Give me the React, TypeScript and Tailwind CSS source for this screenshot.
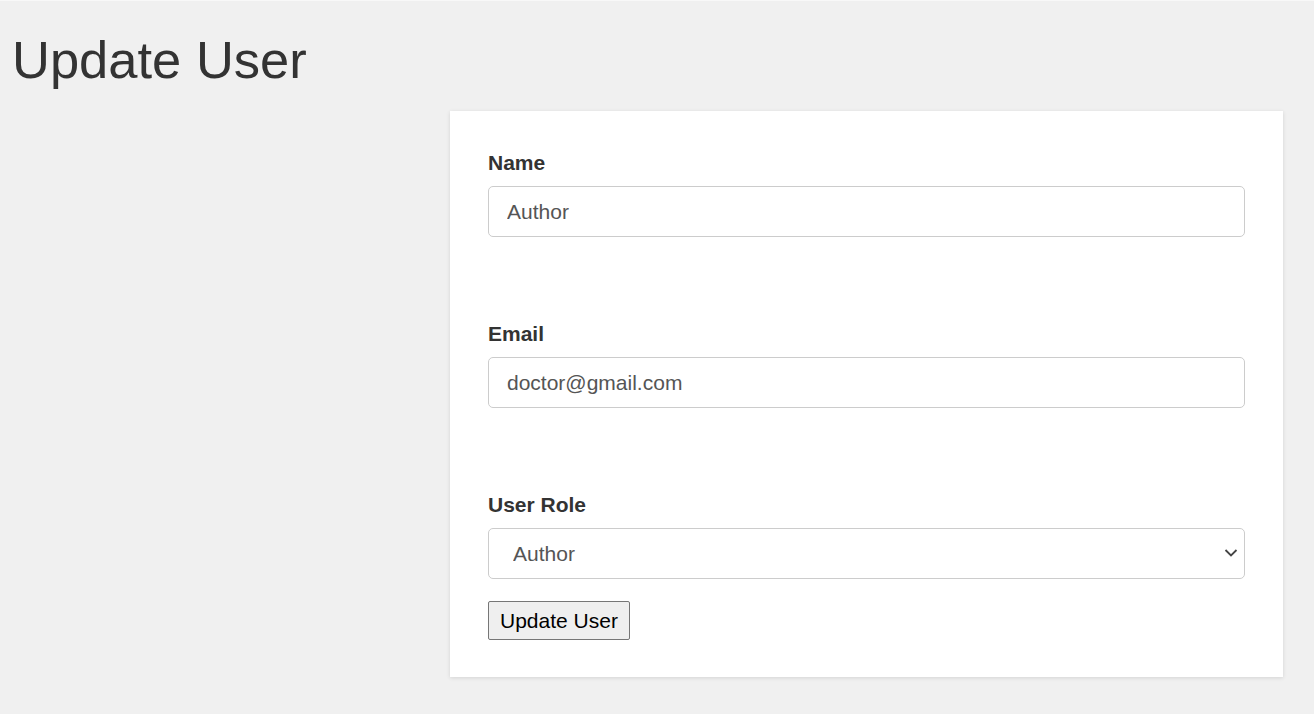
export default function App() {
  return (
    <div
      className="min-h-[714px] bg-[#f0f0f0] border-t border-[#f8f8f8]"
      style={{ fontFamily: '"Liberation Sans", Arial, sans-serif' }}
    >
      <h1 className="pl-3 pt-[29px] text-[52.5px] leading-[60px] text-[#333]">Update User</h1>

      <div className="flex justify-end pr-[31px] mt-[21px]">
        <form className="w-[833px] bg-white px-[38px] pt-[40px] pb-[37px] shadow-[0_1px_4px_rgba(0,0,0,0.12)]">
          <label className="block text-[21px] leading-[24px] font-bold text-[#333]">Name</label>
          <input
            defaultValue="Author"
            className="mt-[11px] block w-full h-[51px] px-[18px] text-[21px] text-[#555] border border-[#ccc] rounded-[5px] outline-none"
          />

          <label className="mt-[85px] block text-[21px] leading-[24px] font-bold text-[#333]">Email</label>
          <input
            defaultValue="doctor@gmail.com"
            className="mt-[11px] block w-full h-[51px] px-[18px] text-[21px] text-[#555] border border-[#ccc] rounded-[5px] outline-none"
          />

          <label className="mt-[85px] block text-[21px] leading-[24px] font-bold text-[#333]">User Role</label>
          <div className="relative mt-[11px]">
            <select
              defaultValue="Author"
              className="block w-full h-[51px] pl-[24px] pr-10 text-[21px] text-[#555] bg-white border border-[#ccc] rounded-[5px] appearance-none outline-none"
            >
              <option>Admin</option>
              <option>Author</option>
              <option>Editor</option>
            </select>
            <svg
              className="absolute right-[7px] top-[20px] pointer-events-none"
              width="14"
              height="10"
              viewBox="0 0 14 10"
              fill="none"
            >
              <path d="M1.5 2 7 7.5 12.5 2" stroke="#444" strokeWidth="1.8" />
            </svg>
          </div>

          <button
            type="button"
            className="mt-[22px] block h-[39px] px-[11px] text-[21px] text-black bg-[#efefef] border border-[#767676] rounded-[2px]"
          >
            Update User
          </button>
        </form>
      </div>
    </div>
  )
}
